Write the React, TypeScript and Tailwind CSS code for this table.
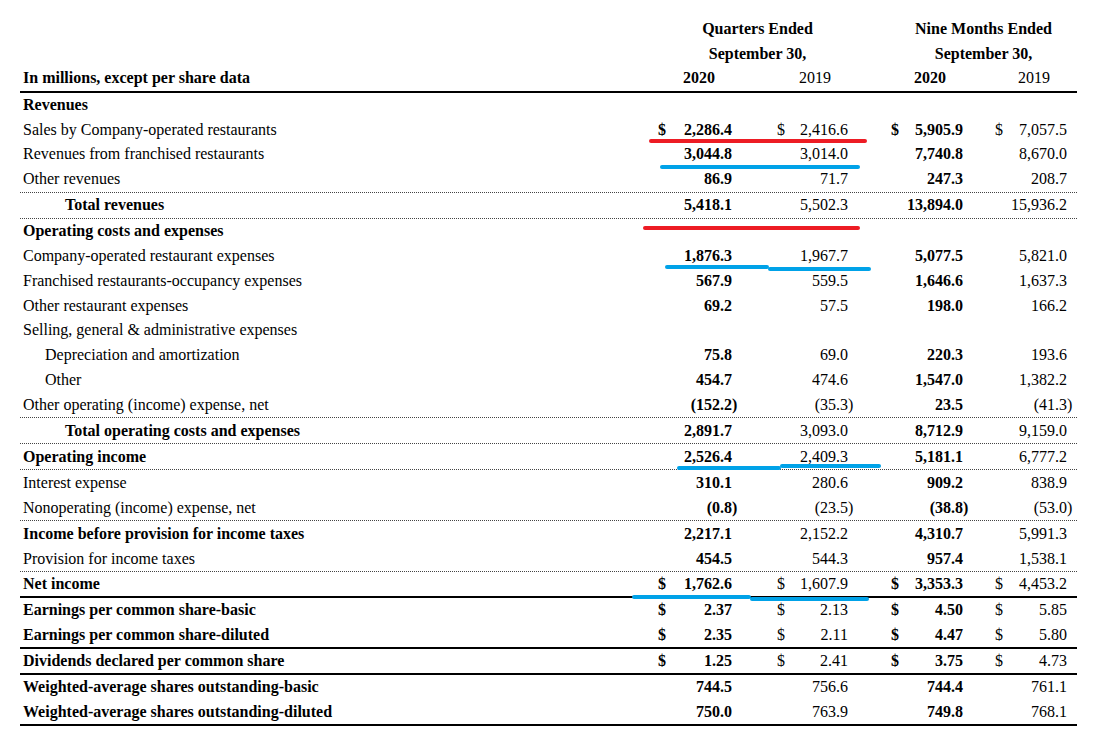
import clsx from "clsx";

type Row = {
  label: string;
  indent?: 0 | 1 | 2;
  bold?: boolean;
  values?: string[];
  dollar?: boolean;
  line?: "dotted" | "solid";
};

const rows: Row[] = [
  { label: "Revenues", bold: true },
  {
    label: "Sales by Company-operated restaurants",
    values: ["2,286.4", "2,416.6", "5,905.9", "7,057.5"],
    dollar: true,
  },
  {
    label: "Revenues from franchised restaurants",
    values: ["3,044.8", "3,014.0", "7,740.8", "8,670.0"],
  },
  {
    label: "Other revenues",
    values: ["86.9", "71.7", "247.3", "208.7"],
    line: "dotted",
  },
  {
    label: "Total revenues",
    indent: 2,
    bold: true,
    values: ["5,418.1", "5,502.3", "13,894.0", "15,936.2"],
    line: "dotted",
  },
  { label: "Operating costs and expenses", bold: true },
  {
    label: "Company-operated restaurant expenses",
    values: ["1,876.3", "1,967.7", "5,077.5", "5,821.0"],
  },
  {
    label: "Franchised restaurants-occupancy expenses",
    values: ["567.9", "559.5", "1,646.6", "1,637.3"],
  },
  {
    label: "Other restaurant expenses",
    values: ["69.2", "57.5", "198.0", "166.2"],
  },
  { label: "Selling, general & administrative expenses" },
  {
    label: "Depreciation and amortization",
    indent: 1,
    values: ["75.8", "69.0", "220.3", "193.6"],
  },
  {
    label: "Other",
    indent: 1,
    values: ["454.7", "474.6", "1,547.0", "1,382.2"],
  },
  {
    label: "Other operating (income) expense, net",
    values: ["(152.2)", "(35.3)", "23.5", "(41.3)"],
    line: "dotted",
  },
  {
    label: "Total operating costs and expenses",
    indent: 2,
    bold: true,
    values: ["2,891.7", "3,093.0", "8,712.9", "9,159.0"],
    line: "dotted",
  },
  {
    label: "Operating income",
    bold: true,
    values: ["2,526.4", "2,409.3", "5,181.1", "6,777.2"],
    line: "dotted",
  },
  {
    label: "Interest expense",
    values: ["310.1", "280.6", "909.2", "838.9"],
  },
  {
    label: "Nonoperating (income) expense, net",
    values: ["(0.8)", "(23.5)", "(38.8)", "(53.0)"],
    line: "dotted",
  },
  {
    label: "Income before provision for income taxes",
    bold: true,
    values: ["2,217.1", "2,152.2", "4,310.7", "5,991.3"],
  },
  {
    label: "Provision for income taxes",
    values: ["454.5", "544.3", "957.4", "1,538.1"],
    line: "dotted",
  },
  {
    label: "Net income",
    bold: true,
    values: ["1,762.6", "1,607.9", "3,353.3", "4,453.2"],
    dollar: true,
    line: "solid",
  },
  {
    label: "Earnings per common share-basic",
    bold: true,
    values: ["2.37", "2.13", "4.50", "5.85"],
    dollar: true,
  },
  {
    label: "Earnings per common share-diluted",
    bold: true,
    values: ["2.35", "2.11", "4.47", "5.80"],
    dollar: true,
    line: "solid",
  },
  {
    label: "Dividends declared per common share",
    bold: true,
    values: ["1.25", "2.41", "3.75", "4.73"],
    dollar: true,
    line: "solid",
  },
  {
    label: "Weighted-average shares outstanding-basic",
    bold: true,
    values: ["744.5", "756.6", "744.4", "761.1"],
  },
  {
    label: "Weighted-average shares outstanding-diluted",
    bold: true,
    values: ["750.0", "763.9", "749.8", "768.1"],
    line: "solid",
  },
];

// dollar sign offset / value right padding per column (2020 cols bold)
const cols = [
  { pad: "pl-[18px] pr-[8px]", bold: true },
  { pad: "pl-[37px] pr-[8px]", bold: false },
  { pad: "pl-[35px] pr-[8px]", bold: true },
  { pad: "pl-[24px] pr-[10px]", bold: false },
];

const indentClass = ["pl-[3px]", "pl-[25px]", "pl-[45px]"];

const grid = "grid grid-cols-[620px_100px_116px_115px_106px]";

const Value = ({ text }: { text: string }) => {
  if (text.startsWith("(")) {
    return (
      <span className="whitespace-nowrap">
        {text.slice(0, -1)}
        <span className="inline-block w-0">)</span>
      </span>
    );
  }
  return <span className="whitespace-nowrap">{text}</span>;
};

// hand-drawn highlight strokes
const marks = [
  "left-[649px] top-[139px] w-[218px] bg-[#ed1c24]",
  "left-[660px] top-[165px] w-[200px] bg-[#00a2e8]",
  "left-[643px] top-[226px] w-[217px] bg-[#ed1c24]",
  "left-[665px] top-[265px] w-[104px] bg-[#00a2e8]",
  "left-[768px] top-[267px] w-[103px] bg-[#00a2e8]",
  "left-[677px] top-[466px] w-[104px] bg-[#00a2e8]",
  "left-[780px] top-[464px] w-[101px] bg-[#00a2e8]",
  "left-[632px] top-[595px] w-[119px] bg-[#00a2e8]",
  "left-[750px] top-[597px] w-[119px] bg-[#00a2e8]",
];

const App = () => {
  return (
    <div className="relative w-[1100px] h-[729px] overflow-hidden bg-white text-black font-['Liberation_Serif',serif] text-[16px]">
      <div className="ml-[20px] w-[1057px] pt-[17px]">
        {/* header */}
        <div className="border-b-2 border-black">
          <div className={clsx(grid, "h-[24.5px] items-center font-bold")}>
            <div />
            <div className="col-span-2 pl-[19px] text-center">Quarters Ended</div>
            <div className="col-span-2 pl-[34px] text-center">Nine Months Ended</div>
          </div>
          <div className={clsx(grid, "h-[24.5px] items-center font-bold")}>
            <div />
            <div className="col-span-2 pl-[19px] text-center">September 30,</div>
            <div className="col-span-2 pl-[34px] text-center">September 30,</div>
          </div>
          <div className={clsx(grid, "h-[24.5px] items-center")}>
            <div className="pl-[3px] font-bold">In millions, except per share data</div>
            <div className="pr-[25px] text-right font-bold">2020</div>
            <div className="pr-[25px] text-right">2019</div>
            <div className="pr-[25px] text-right font-bold">2020</div>
            <div className="pr-[27px] text-right">2019</div>
          </div>
        </div>

        {rows.map((row) => (
          <div
            key={row.label}
            className={clsx(
              grid,
              "items-center",
              row.line ? "h-[26px]" : "h-[24.8px]",
              row.line === "dotted" && "border-b border-dotted border-[#444]",
              row.line === "solid" && "border-b-2 border-black"
            )}
          >
            <div
              className={clsx(
                "whitespace-nowrap",
                indentClass[row.indent ?? 0],
                row.bold && "font-bold"
              )}
            >
              {row.label}
            </div>
            {row.values
              ? row.values.map((v, i) => (
                  <div
                    key={i}
                    className={clsx(
                      "flex items-center justify-between",
                      cols[i].pad,
                      cols[i].bold && "font-bold"
                    )}
                  >
                    <span>{row.dollar ? "$" : ""}</span>
                    <Value text={v} />
                  </div>
                ))
              : null}
          </div>
        ))}
      </div>

      {marks.map((m) => (
        <div key={m} className={clsx("absolute h-[4px] rounded-full", m)} />
      ))}
    </div>
  );
};

export default App;
